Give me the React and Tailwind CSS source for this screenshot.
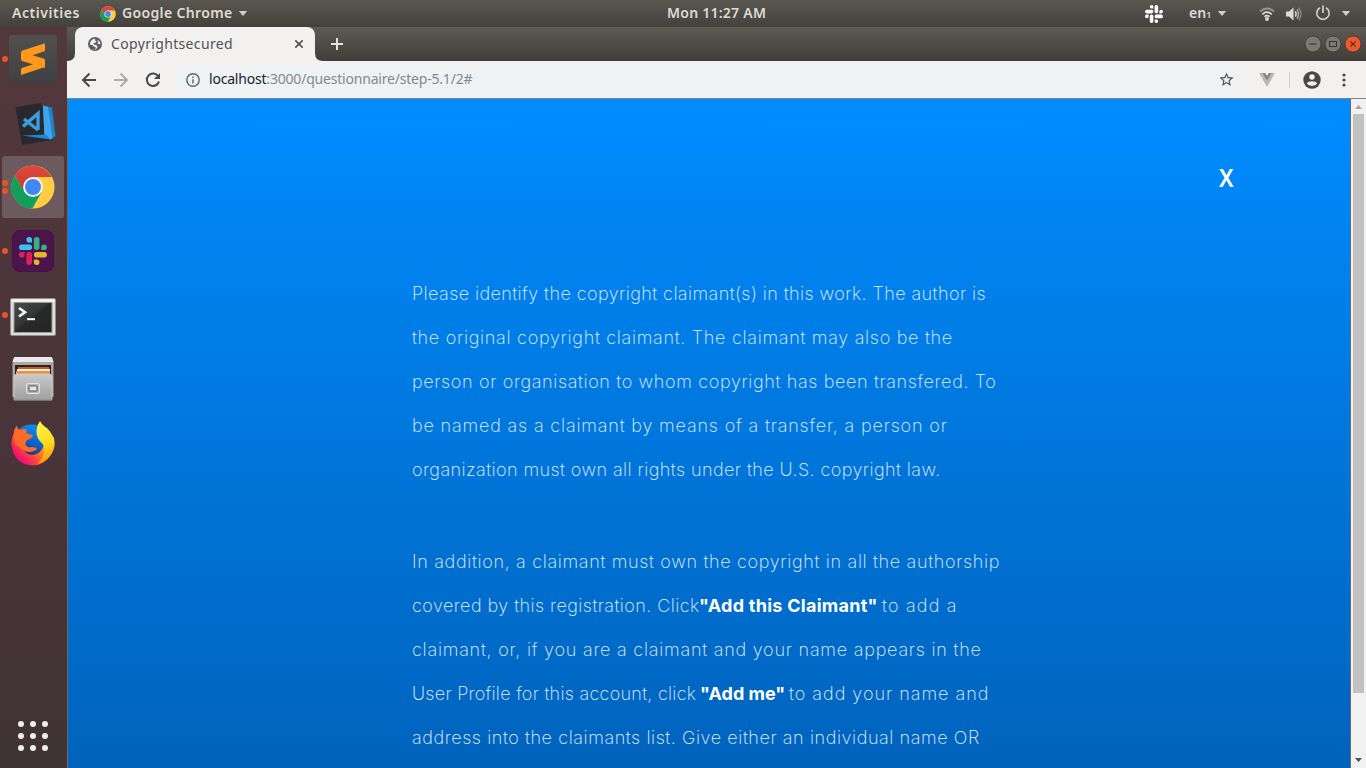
const UI = "font-['Noto_Sans','Open_Sans',sans-serif]";

function ChromeLogo({ className }) {
  return (
    <svg viewBox="0 0 48 48" className={className}>
      <defs>
        <linearGradient id="cr" x1="0" y1="0" x2="0" y2="1">
          <stop offset="0" stopColor="#e0493e" />
          <stop offset="1" stopColor="#c63a2f" />
        </linearGradient>
      </defs>
      <circle cx="24" cy="24" r="23.5" fill="#ffcd41" />
      <path d="M24 .5A23.500 23.500 0 0 1 44.700 13.200L24 13.200 14.700 29.400 4 11.500A23.500 23.500 0 0 1 24 .5z" fill="url(#cr)" />
      <path d="M4 11.500L14.700 29.400 33.400 29.400 23.300 47.500A23.500 23.500 0 0 1 4 11.500z" fill="#11a05b" />
      <circle cx="24" cy="24" r="10.800" fill="#f4f5f5" />
      <circle cx="24" cy="24" r="8.700" fill="#4285f5" />
    </svg>
  );
}

function SlackMark({ className, mono }) {
  const c = mono ? ["#fff", "#fff", "#fff", "#fff"] : ["#36c5f0", "#2eb67d", "#ecb22e", "#e01e5a"];
  return (
    <svg viewBox="0 0 54 54" className={className}>
      <path fill={c[0]} d="M19.700 0a5.400 5.400 0 1 0 0 10.800h5.400V5.400A5.400 5.400 0 0 0 19.700 0m0 14.400H5.400a5.400 5.400 0 1 0 0 10.800h14.300a5.400 5.400 0 1 0 0-10.800" />
      <path fill={c[1]} d="M53.800 19.800a5.400 5.400 0 1 0-10.800 0v5.400h5.400a5.400 5.400 0 0 0 5.400-5.400m-14.300 0V5.400a5.400 5.400 0 1 0-10.800 0v14.400a5.400 5.400 0 1 0 10.800 0" />
      <path fill={c[2]} d="M34.100 54a5.400 5.400 0 1 0 0-10.800h-5.400v5.400a5.400 5.400 0 0 0 5.400 5.400m0-14.400h14.300a5.400 5.400 0 1 0 0-10.800H34.100a5.400 5.400 0 1 0 0 10.800" />
      <path fill={c[3]} d="M0 34.200a5.400 5.400 0 1 0 10.800 0v-5.400H5.400A5.400 5.400 0 0 0 0 34.200m14.300 0v14.400a5.400 5.400 0 1 0 10.800 0V34.200a5.400 5.400 0 1 0-10.800 0" />
    </svg>
  );
}

function SublimeIcon() {
  return (
    <svg viewBox="0 0 48 48" className="size-12">
      <defs>
        <linearGradient id="sb" x1="0" y1="0" x2="0" y2="1">
          <stop offset="0" stopColor="#505050" />
          <stop offset="1" stopColor="#3f4041" />
        </linearGradient>
      </defs>
      <rect width="48" height="48" rx="3" fill="url(#sb)" />
      <path d="M12 25.500L36 33V25L22 20.500 12 25.500z" fill="#e6811a" />
      <path d="M36 8.200L13.500 15.500Q12 16 12 17.500V24Q12 25.500 13.500 26L24 29.300 13.500 32.700Q12 33.200 12 34.500V40L34.500 32.500Q36 32 36 30.500V25.500Q36 24 34.500 23.500L23.500 20.200 34.500 16.600Q36 16 36 15z" fill="#ff981d" />
    </svg>
  );
}

function CodeIcon() {
  return (
    <svg viewBox="0 0 44 46" className="h-[46px] w-11">
      <path d="M2.500 5.300L28 1 40 38 9 43z" fill="#29292d" />
      <path d="M30 3.500L39 5.500 42.500 34 37.500 37.500 31.500 35z" fill="#1c84cf" />
      <path d="M30 3.500L35 5 39.500 36.200 37.500 37.500 31.500 35z" fill="#41a5ee" />
      <path d="M9 33.500L33 32.500 37.500 37.500z" fill="#1a87d7" />
      <path d="M11 17L25 28M10 24.500L25 11.500V28" fill="none" stroke="#3b9ddd" strokeWidth="3.400" />
    </svg>
  );
}

function TerminalIcon() {
  return (
    <svg viewBox="0 0 46 38" className="h-[38px] w-[46px]">
      <defs>
        <linearGradient id="tg" x1="0" y1="0" x2="1" y2="1">
          <stop offset="0" stopColor="#484a49" />
          <stop offset=".45" stopColor="#343635" />
          <stop offset=".5" stopColor="#282a29" />
          <stop offset="1" stopColor="#242524" />
        </linearGradient>
      </defs>
      <rect x=".5" y=".5" width="45" height="37" rx="1.500" fill="#dcdcdc" stroke="#8f8f8f" />
      <rect x="1.500" y="1.500" width="43" height="2" fill="#f8f8f8" />
      <rect x="3.500" y="4" width="39" height="31" fill="#9b9b9b" />
      <rect x="4.500" y="5" width="37" height="29" fill="url(#tg)" />
      <path d="M9 10L15 14.200 9 18.500" fill="none" stroke="#f0f0f0" strokeWidth="2.700" />
      <path d="M17 21.200h8" stroke="#fff" strokeWidth="2" />
    </svg>
  );
}

function FilesIcon() {
  return (
    <svg viewBox="0 0 42 44" className="h-11 w-[42px]">
      <defs>
        <linearGradient id="fg" x1="0" y1="0" x2="0" y2="1">
          <stop offset="0" stopColor="#c9c9c9" />
          <stop offset="1" stopColor="#a0a0a0" />
        </linearGradient>
      </defs>
      <path d="M3 0H39Q40 0 40.500 2L41.500 5V40H.5V5L1.500 2Q2 0 3 0z" fill="#a9a9a9" />
      <path d="M3 0H39Q40 0 40.500 2L41.500 5H.5L1.500 2Q2 0 3 0z" fill="#e8e8e8" />
      <rect x="3" y="8" width="36" height="10" fill="#262322" />
      <rect x="6" y="10" width="31" height="8" fill="#cb5724" />
      <rect x="5" y="12" width="33" height="2" fill="#fff0db" />
      <rect x="4" y="14" width="34" height="4" fill="#e79343" />
      <path d="M4 17H38L40 19V43H2V19z" fill="url(#fg)" stroke="#dadada" strokeWidth=".6" />
      <path d="M2 43H40" stroke="#7b7b7b" />
      <rect x="14.500" y="26.500" width="13" height="10" rx="1.500" fill="#b6b6b6" stroke="#e2e2e2" />
      <rect x="17" y="29" width="8" height="5" rx=".5" fill="#e4e4e4" stroke="#555" />
    </svg>
  );
}

function FirefoxIcon() {
  return (
    <svg viewBox="0 0 46 46" className="size-[46px]">
      <defs>
        <linearGradient id="ff1" x1=".85" y1=".2" x2=".15" y2=".8">
          <stop offset="0" stopColor="#ffd51d" />
          <stop offset=".4" stopColor="#ff8a16" />
          <stop offset=".7" stopColor="#ff463d" />
          <stop offset="1" stopColor="#ef0c77" />
        </linearGradient>
        <linearGradient id="ff2" x1=".3" y1="0" x2=".5" y2="1">
          <stop offset="0" stopColor="#fff44f" />
          <stop offset=".55" stopColor="#ffdb1d" />
          <stop offset="1" stopColor="#ff9010" />
        </linearGradient>
        <linearGradient id="ff3" x1=".6" y1="0" x2=".3" y2="1">
          <stop offset="0" stopColor="#0a8df0" />
          <stop offset=".6" stopColor="#0b5fc4" />
          <stop offset="1" stopColor="#1b2f8a" />
        </linearGradient>
      </defs>
      <path d="M1.500 25Q1 17 5 12L12 8H36L44 18Q46 28 40 36 33 45.500 23 45.500 4 45 1.500 25z" fill="url(#ff1)" />
      <path d="M9 9Q14 4.500 22 4.500 29 4.500 33 9L34 24Q32 34 22 35 15 34 12 27z" fill="url(#ff3)" />
      <path d="M3.500 15Q4 9 6.500 5.500 7.500 8.500 9.500 10 13 8.500 17 9.500 16 12 16.500 13.500L23 15Q22 18.500 17 20 15 22 15.500 25 18 28.500 22 27 26 27 27 29 23.500 32.500 18 32 15 32 12 29L5 24z" fill="#ff6a28" />
      <path d="M30 1Q32 5 37.500 8.500 45 16 44.500 26 41 41 27 44 36 37 33.500 25 25.500 18 26.500 10 27 4.500 30 1z" fill="url(#ff2)" />
    </svg>
  );
}

const apps = [
  { id: "sublime", icon: <SublimeIcon />, dots: 1, pad: "pt-2" },
  { id: "code", icon: <CodeIcon />, dots: 0, pad: "pt-[11px] pl-1" },
  { id: "chrome", icon: <ChromeLogo className="size-11" />, dots: 2, active: true, pad: "pt-px" },
  {
    id: "slack",
    icon: (
      <div className="flex size-[42px] items-center justify-center rounded-lg border border-[#411243] bg-[#4b154c]">
        <SlackMark className="size-7" />
      </div>
    ),
    dots: 1,
    pad: "pt-[11px]",
  },
  { id: "terminal", icon: <TerminalIcon />, dots: 1, pad: "pt-[15px]" },
  { id: "files", icon: <FilesIcon />, dots: 0, pad: "pt-[10px]" },
  { id: "firefox", icon: <FirefoxIcon />, dots: 0, pad: "pt-[9px]" },
];

function Dock() {
  return (
    <aside className="flex w-[67px] shrink-0 flex-col bg-linear-to-b from-[#53383b] via-[#49343a] to-[#403335]">
      {apps.map((a) => (
        <div key={a.id} className={`relative flex h-16 w-[66px] shrink-0 justify-center ${a.pad}`}>
          {a.active ? (
            <div className="flex h-[62px] w-[62px] items-center justify-center rounded-[3px] bg-[#6d5a5e]">{a.icon}</div>
          ) : (
            a.icon
          )}
          {a.dots > 0 && (
            <div className="absolute top-0 left-[2px] flex h-16 flex-col items-center justify-center gap-[2px]">
              {Array.from({ length: a.dots }, (_, i) => (
                <span key={i} className="size-[6px] rounded-full bg-[#e95420]" />
              ))}
            </div>
          )}
        </div>
      ))}
      <div className="mt-auto mb-[17px] ml-[18px] grid w-[30px] grid-cols-3 gap-[6px]">
        {Array.from({ length: 9 }, (_, i) => (
          <span key={i} className="size-[6px] rounded-full bg-[#eeeeec]" />
        ))}
      </div>
    </aside>
  );
}

function Caret({ className }) {
  return (
    <svg viewBox="0 0 10 6" className={`h-[5px] w-[10px] ${className}`}>
      <path d="M0 0H10L5 6z" fill="#d0cec8" />
    </svg>
  );
}

function TopBar() {
  return (
    <header className={`flex h-[27px] shrink-0 items-center bg-linear-to-b from-[#59574f] to-[#42413c] text-[14px] leading-[25px] font-semibold text-[#dfdbd2] ${UI}`}>
      <span className="ml-3 w-[88px] pb-[2px] tracking-[0.55px] whitespace-nowrap">Activities</span>
      <ChromeLogo className="size-4" />
      <span className="ml-[6px] w-[112px] pb-[2px] tracking-[0.35px] whitespace-nowrap">Google Chrome</span>
      <Caret className="ml-1" />
      <span className="ml-[419px] w-[100px] pb-[2px] tracking-[0.25px] whitespace-nowrap">Mon 11:27 AM</span>
      <SlackMark mono className="ml-[378px] size-[18px]" />
      <span className="ml-[26px] w-[24px] whitespace-nowrap">
        en<span className="text-[9px]">1</span>
      </span>
      <Caret className="ml-1" />
      <svg viewBox="0 0 16 14" className="ml-[32px] h-[14px] w-4" fill="none" stroke="#dfdbd2" strokeWidth="1.800">
        <path d="M1 4.500Q8-1.500 15 4.500" stroke="#97958d" />
        <path d="M3.300 7.300Q8 3 12.700 7.300" />
        <path d="M5.500 9.700Q8 7.600 10.500 9.700" />
        <circle cx="8" cy="12" r="1" fill="#dfdbd2" />
      </svg>
      <svg viewBox="0 0 16 14" className="ml-[11px] h-[14px] w-4" fill="none">
        <path d="M0 4.500H3L7.500.5V13.500L3 9.500H0z" fill="#dfdbd2" />
        <path d="M9.300 4.300Q11 7 9.300 9.700" stroke="#dfdbd2" strokeWidth="1.400" />
        <path d="M11 2.300Q14 7 11 11.700" stroke="#b0ada5" strokeWidth="1.400" />
        <path d="M12.900.7Q17 7 12.900 13.300" stroke="#88867e" strokeWidth="1.400" />
      </svg>
      <svg viewBox="0 0 16 16" className="mb-px ml-[13px] size-4" fill="none" stroke="#d0cec8" strokeWidth="1.700">
        <path d="M5 2.700A6.200 6.200 0 1 0 11 2.700M8 .5V8" />
      </svg>
      <Caret className="ml-[10px]" />
    </header>
  );
}

function TabStrip() {
  return (
    <div className={`flex h-[34px] items-end bg-linear-to-b from-[#5d5b53] to-[#3f3e39] ${UI}`}>
      <svg viewBox="0 0 8 8" className="size-2">
        <path d="M8 0V8H0Q8 8 8 0z" fill="#f2f1f0" />
      </svg>
      <div className="flex h-[34px] w-[240px] items-center rounded-t-lg bg-[#f2f1f0] pl-[13px]">
        <svg viewBox="0 0 14 14" className="size-[14px]">
          <circle cx="7" cy="7" r="7" fill="#5a5f64" />
          <path d="M7 1.500C4 2 2 4 1.800 7.500L5 8.200 5.500 9.500 7.500 10V12.200C6 12.700 4.500 12 3.500 11.200 4 12 6 13 8 12.200L9.500 10.200 9 8.500 6 7.500 5.500 6 8 5.500 8.500 4.200 7 3.500z" fill="#f2f1f0" />
          <path d="M9 2.500L10.500 4.500 9.500 6.500 11.500 7.500 12.500 6Q12 3.500 9 2.500z" fill="#f2f1f0" />
        </svg>
        <span className="ml-[9px] w-[181px] pb-[2px] text-[14px] tracking-[0.34px] text-[#505255]">Copyrightsecured</span>
        <svg viewBox="0 0 8 8" className="ml-[3px] size-2" stroke="#4c4f52" strokeWidth="1.600">
          <path d="M.3.3L7.700 7.700M7.700.3L.3 7.700" />
        </svg>
      </div>
      <svg viewBox="0 0 8 8" className="size-2">
        <path d="M0 0V8H8Q0 8 0 0z" fill="#f2f1f0" />
      </svg>
      <svg viewBox="0 0 12 12" className="mb-[11px] ml-2 size-3" stroke="#e4e2dd" strokeWidth="2">
        <path d="M6 0V12M0 6H12" />
      </svg>
      <div className="mr-[5px] mb-[9px] ml-auto flex gap-1">
        <WinButton fill="#7b7971" d="M4.500 8H11.500" />
        <WinButton fill="#7b7971" d="M4.500 5.500H11.500V10.500H4.500z" />
        <WinButton fill="#f1582c" d="M5.300 5.300L10.700 10.700M10.700 5.300L5.300 10.700" />
      </div>
    </div>
  );
}

function WinButton({ fill, d }) {
  return (
    <svg viewBox="0 0 16 16" className="size-4 overflow-visible" fill="none">
      <circle cx="8" cy="8" r="8" fill={fill} stroke="#3a3935" strokeWidth=".8" />
      <path d={d} stroke="#35342f" strokeWidth="1.100" />
    </svg>
  );
}

function Toolbar() {
  return (
    <div className={`flex h-[38px] items-center border-b border-[#85837e] bg-[#f2f1f0] ${UI}`}>
      <svg viewBox="0 0 16 16" className="ml-[14px] size-4" fill="none" stroke="#46494c" strokeWidth="2">
        <path d="M15 8H2.500M8.500 1.500L2 8 8.500 14.500" />
      </svg>
      <svg viewBox="0 0 16 16" className="ml-4 size-4" fill="none" stroke="#aaabaa" strokeWidth="2">
        <path d="M1 8H13.500M7.500 1.500L14 8 7.500 14.500" />
      </svg>
      <svg viewBox="0 0 16 16" className="ml-4 size-4" fill="none" stroke="#46494c" strokeWidth="2">
        <path d="M13.300 4.500A6.200 6.200 0 1 0 14 9.500" />
        <path d="M15 1V7H9z" fill="#46494c" stroke="none" />
      </svg>
      <div className="ml-[13px] flex h-7 w-[1069px] items-center rounded-full bg-[#eef2f4]">
        <svg viewBox="0 0 14 14" className="ml-[12px] size-[14px]" fill="none" stroke="#5f6468" strokeWidth="1.400">
          <circle cx="7" cy="7" r="6.200" />
          <path d="M7 6.200V10.500M7 3.500V5" />
        </svg>
        <span className="ml-[9px] pb-[2px] text-[14px] tracking-[-0.2px] whitespace-nowrap text-[#84898d]">
          <span className="text-[#202427]">localhost</span>:3000/questionnaire/step-5.1/2#
        </span>
        <svg viewBox="0 0 24 24" className="mr-[8px] ml-auto size-[17px]" fill="#4c5054">
          <path d="M22 9.240l-7.190-.62L12 2 9.190 8.630 2 9.240l5.460 4.730L5.820 21 12 17.270 18.180 21l-1.630-7.030L22 9.240zM12 15.400l-3.760 2.270 1-4.280-3.320-2.880 4.380-.38L12 6.100l1.710 4.040 4.380.38-3.320 2.880 1 4.280L12 15.400z" />
        </svg>
      </div>
      <svg viewBox="0 0 16 14" className="ml-4 h-[14px] w-4">
        <path d="M0 0H3.300L8 8 12.700 0H16L8 14z" fill="#b9b9b8" />
        <path d="M3.300 0H6.200L8 3 9.800 0H12.700L8 8z" fill="#858584" />
      </svg>
      <span className="ml-[14px] h-4 w-px bg-[#cfcecc]" />
      <svg viewBox="0 0 18 18" className="ml-[13px] size-[18px]">
        <circle cx="9" cy="9" r="8.700" fill="#46484a" />
        <circle cx="9" cy="6" r="2.700" fill="#f2f1f0" />
        <path d="M3.700 12.200Q5 10.200 9 10.200T14.300 12.200Q12.500 15 9 15T3.700 12.200z" fill="#f2f1f0" />
      </svg>
      <svg viewBox="0 0 4 14" className="ml-[21px] h-[14px] w-1" fill="#46484a">
        <circle cx="2" cy="2" r="1.600" />
        <circle cx="2" cy="7" r="1.600" />
        <circle cx="2" cy="12" r="1.600" />
      </svg>
    </div>
  );
}

function Page() {
  return (
    <main className="flex-1 overflow-hidden bg-linear-to-b from-[#008cff] to-[#0063bc] font-['Inter',sans-serif] text-[18px] leading-[44px] font-extralight whitespace-nowrap text-[#e3f1ff]">
      <div className="flex h-[173px] justify-end pt-[56px] pr-[115px] font-['Noto_Sans',sans-serif] text-[26px] font-semibold text-white">
        <button className="h-[44px] w-4 origin-left scale-x-88 leading-[44px]">X</button>
      </div>
      <article className="ml-[344px] w-[600px]">
        <p>
          <span className="block tracking-[0.44px]">Please identify the copyright claimant(s) in this work. The author is</span>
          <span className="block tracking-[0.72px]">the original copyright claimant. The claimant may also be the</span>
          <span className="block tracking-[0.65px]">person or organisation to whom copyright has been transfered. To</span>
          <span className="block tracking-[0.84px]">be named as a claimant by means of a transfer, a person or</span>
          <span className="block tracking-[0.44px]">organization must own all rights under the U.S. copyright law.</span>
        </p>
        <p className="mt-12">
          <span className="block tracking-[0.68px]">In addition, a claimant must own the copyright in all the authorship</span>
          <span className="flex">
            <span className="w-[287px] tracking-[0.46px]">covered by this registration. Click</span>
            <b className="w-[183px] font-bold tracking-[0.27px] text-white">"Add this Claimant"</b>
            <span className="tracking-[1.2px]">to add a</span>
          </span>
          <span className="block tracking-[0.78px]">claimant, or, if you are a claimant and your name appears in the</span>
          <span className="flex">
            <span className="w-[288px] tracking-[0.28px]">User Profile for this account, click</span>
            <b className="w-[89px] font-bold text-white">"Add me"</b>
            <span className="tracking-[1px]">to add your name and</span>
          </span>
          <span className="block tracking-[0.59px]">address into the claimants list. Give either an individual name OR</span>
        </p>
      </article>
    </main>
  );
}

function ScrollBar() {
  return (
    <div className="flex w-4 flex-col items-center border-l border-[#6b6a64] bg-[#f1f1f1]">
      <svg viewBox="0 0 7 4" className="mt-[6px] h-1 w-[7px]">
        <path d="M3.500 0L7 4H0z" fill="#a3a3a3" />
      </svg>
      <div className="mt-[5px] h-[579px] w-[11px] bg-[#c1c1c1]" />
      <svg viewBox="0 0 7 4" className="mt-auto mb-[6px] h-1 w-[7px]">
        <path d="M0 0H7L3.500 4z" fill="#505050" />
      </svg>
    </div>
  );
}

export default function App() {
  return (
    <div className="flex h-[768px] w-[1366px] flex-col overflow-hidden">
      <TopBar />
      <div className="flex min-h-0 flex-1">
        <Dock />
        <div className="flex min-w-0 flex-1 flex-col">
          <TabStrip />
          <Toolbar />
          <div className="flex min-h-0 flex-1 border-l border-[#6b6a64]">
            <Page />
            <ScrollBar />
          </div>
        </div>
      </div>
    </div>
  );
}
